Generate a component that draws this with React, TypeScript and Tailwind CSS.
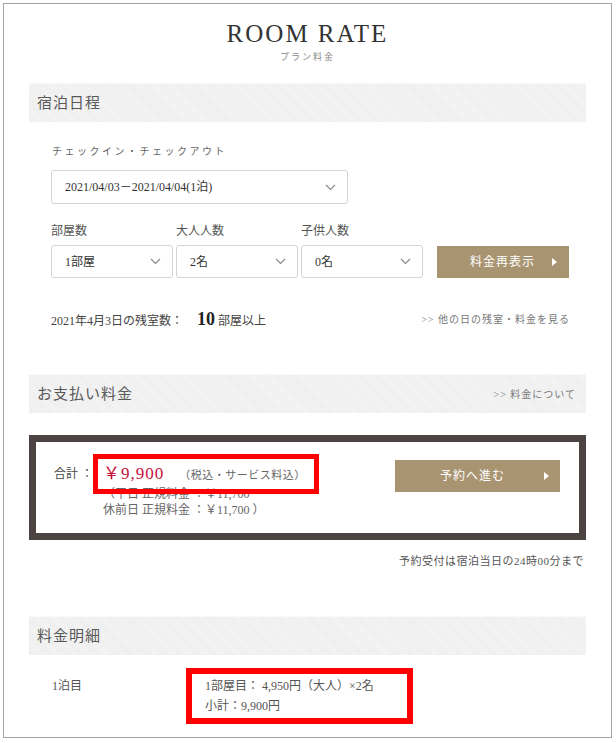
import React from 'react';

const Chevron = () => (
  <svg width="11" height="7" viewBox="0 0 11 7" className="shrink-0">
    <polyline points="1,1 5.5,5.5 10,1" fill="none" stroke="#8a8a8a" strokeWidth="1.2" />
  </svg>
);

const Arrow = () => (
  <svg width="5" height="8" viewBox="0 0 5 8" className="shrink-0">
    <polygon points="0,0 5,4 0,8" fill="#ffffff" />
  </svg>
);

const SectionBar = ({ title, link }: { title: string; link?: string }) => (
  <div className="h-[39px] flex items-center justify-between pl-[8px] pr-[10px] bg-[repeating-linear-gradient(45deg,#eeeeee_0px,#eeeeee_1px,#f4f4f4_1px,#f4f4f4_2px)] border-t border-[#f9f9f9]">
    <h2 className="text-[15px] tracking-[1px] text-[#595959]">{title}</h2>
    {link && <span className="text-[10px] tracking-[1px] text-[#7a7a7a]">{link}</span>}
  </div>
);

const Select = ({ value, width }: { value: string; width: string }) => (
  <div className={`${width} h-[33px] flex items-center justify-between pl-[13px] pr-[11px] border border-[#d4d4d4] rounded-[3px] bg-white`}>
    <span className="text-[12px] text-[#333]">{value}</span>
    <Chevron />
  </div>
);

const App = () => {
  const counts = [
    { label: '部屋数', value: '1部屋' },
    { label: '大人人数', value: '2名' },
    { label: '子供人数', value: '0名' },
  ];

  return (
    <div className="min-h-screen bg-white pt-[3px] pl-[3px] font-['Liberation_Serif','Noto_Sans_CJK_JP',serif]">
      <div className="w-[609px] h-[735px] border border-[#a3a3a3] px-[25px] overflow-hidden">
        {/* Title */}
        <header className="pt-[16px] text-center">
          <h1 className="text-[25px] leading-[28px] tracking-[2px] text-[#333]">ROOM RATE</h1>
          <p className="mt-[3px] text-[9px] leading-[12px] tracking-[2px] text-[#888]">プラン料金</p>
        </header>

        {/* 宿泊日程 */}
        <section className="mt-[20px]">
          <SectionBar title="宿泊日程" />
          <div className="pl-[22px]">
            <p className="mt-[22px] text-[10px] leading-[16px] tracking-[2.5px] text-[#666] pl-[1px]">チェックイン・チェックアウト</p>
            <div className="mt-[10px]">
              <Select value="2021/04/03－2021/04/04(1泊)" width="w-[297px] h-[34px]" />
            </div>
            <div className="mt-[19px] flex items-end">
              <div className="flex gap-[3px]">
                {counts.map((c) => (
                  <div key={c.label} className="flex flex-col">
                    <span className="text-[12px] leading-[16px] text-[#555]">{c.label}</span>
                    <div className="mt-[6px]">
                      <Select value={c.value} width="w-[122px]" />
                    </div>
                  </div>
                ))}
              </div>
              <button className="ml-[14px] w-[132px] h-[32px] flex items-center justify-end gap-[17px] pr-[12px] bg-[#a99472] text-white text-[12px] tracking-[1px]">
                <span>料金再表示</span>
                <Arrow />
              </button>
            </div>
            <div className="mt-[31px] h-[20px] flex items-center justify-between pr-[16px]">
              <p className="flex items-baseline text-[12px] text-[#444]">
                <span>2021年4月3日の残室数：</span>
                <span className="ml-[14px] mr-[3px] text-[18px] font-bold text-[#222]">10</span>
                <span>部屋以上</span>
              </p>
              <span className="text-[10px] tracking-[1px] text-[#777]">&gt;&gt; 他の日の残室・料金を見る</span>
            </div>
          </div>
        </section>

        {/* お支払い料金 */}
        <section className="mt-[45px]">
          <SectionBar title="お支払い料金" link=">> 料金について" />
          <div className="mt-[22px] h-[105px] border-[7px] border-[#4b4442] bg-white flex justify-between pl-[18px] pr-[19px] pt-[18px]">
            <div className="flex pt-[3px]">
              <span className="w-[49px] text-[12px] leading-[22px] text-[#444]">合計 ：</span>
              <div className="relative">
                <div className="flex items-baseline leading-[22px]">
                  <span className="text-[17px] tracking-[1px] text-[#c5123c]">￥9,900</span>
                  <span className="ml-[15px] text-[11px] tracking-[0.5px] text-[#666]">（税込・サービス料込）</span>
                </div>
                <p className="text-[12px] leading-[16px] text-[#666]">（平日 正規料金 ：￥11,700</p>
                <p className="text-[12px] leading-[16px] text-[#666]">休前日 正規料金 ：￥11,700 ）</p>
                <span className="absolute left-[-10px] top-[-9px] w-[226px] h-[40px] border-[5px] border-[#ff0000]" />
              </div>
            </div>
            <button className="w-[165px] h-[32px] flex items-center justify-end gap-[39px] pr-[11px] bg-[#a99472] text-white text-[12px] tracking-[1px]">
              <span>予約へ進む</span>
              <Arrow />
            </button>
          </div>
          <p className="mt-[13px] text-right pr-[2px] text-[11px] leading-[16px] tracking-[0.5px] text-[#555]">予約受付は宿泊当日の24時00分まで</p>
        </section>

        {/* 料金明細 */}
        <section className="mt-[47px]">
          <SectionBar title="料金明細" />
          <div className="mt-[21px] flex pl-[23px] text-[12px] leading-[20px] text-[#555]">
            <span className="w-[153px]">1泊目</span>
            <div className="relative">
              <p>1部屋目： 4,950円（大人）×2名</p>
              <p>小計：9,900円</p>
              <span className="absolute left-[-19px] top-[-8px] w-[227px] h-[56px] border-[6px] border-[#ff0000]" />
            </div>
          </div>
        </section>
      </div>
    </div>
  );
};

export default App;
